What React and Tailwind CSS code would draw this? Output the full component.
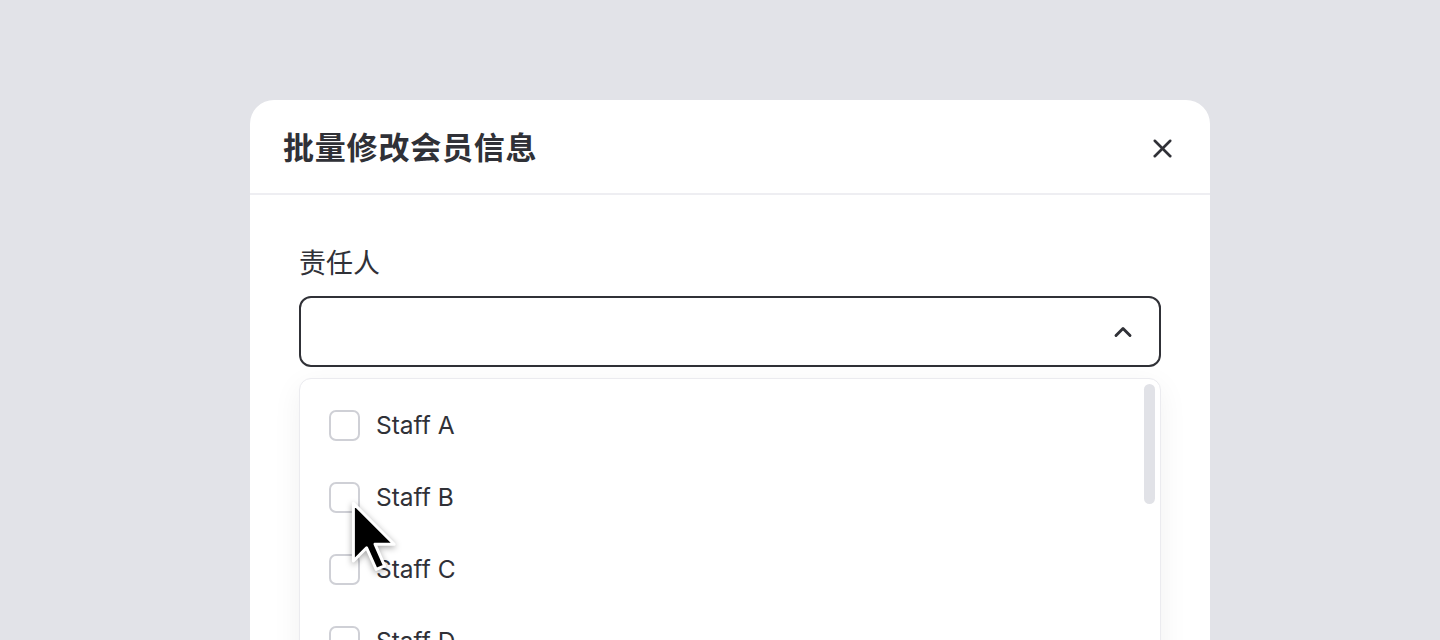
import { X, ChevronUp } from 'lucide-react'

const staff = ['Staff A', 'Staff B', 'Staff C', 'Staff D']

function Cursor() {
  return (
    <svg width="60" height="84" viewBox="0 0 50 70" className="absolute left-[345px] top-[495px] drop-shadow-[0_2px_3px_rgba(0,0,0,0.35)]">
      <path d="M7 7 L7 55 L18 44 L26 62 L33 59 L25 41 L41 41 Z" fill="#000" stroke="#fff" strokeWidth="2.5" strokeLinejoin="round" />
    </svg>
  )
}

export default function App() {
  return (
    <div className="relative w-[1440px] h-[640px] overflow-hidden bg-[#e2e3e8] font-['Inter','Noto_Sans_CJK_SC',sans-serif] text-[#303137]">
      <div className="absolute left-[250px] top-[100px] w-[960px] h-[600px] bg-white rounded-[24px]">
        {/* header */}
        <div className="h-[95px] flex items-center justify-between pt-[3px] pl-[33px] pr-[32px] border-b-2 border-[#eeeef2]">
          <h2 className="text-[31px] font-bold tracking-[0.8px]">批量修改会员信息</h2>
          <X size={31} strokeWidth={2} className="text-[#303137]" />
        </div>

        <div className="px-[49px] pt-[50px]">
          <div className="text-[27px] leading-[38px] mb-[13px]">责任人</div>
          <div className="h-[71px] border-2 border-[#303137] rounded-[12px] flex items-center justify-end pr-[22px]">
            <ChevronUp size={28} strokeWidth={2.5} className="text-[#303137]" />
          </div>

          <div className="relative mt-[11px] h-[300px] border border-[#ebebef] rounded-[12px] bg-white shadow-[0_8px_30px_rgba(0,0,0,0.06)]">
            <div className="absolute right-[5px] top-[5px] w-[11px] h-[120px] rounded-full bg-[#e1e2e7]" />
            <div className="pt-[10px]">
              {staff.map(s => (
                <div key={s} className="h-[72px] flex items-center pl-[29px]">
                  <div className="w-[31px] h-[31px] border-2 border-[#cfd0d6] rounded-[7px]" />
                  <span className="ml-[16px] text-[24.5px]">{s}</span>
                </div>
              ))}
            </div>
          </div>
        </div>
      </div>
      <Cursor />
    </div>
  )
}
